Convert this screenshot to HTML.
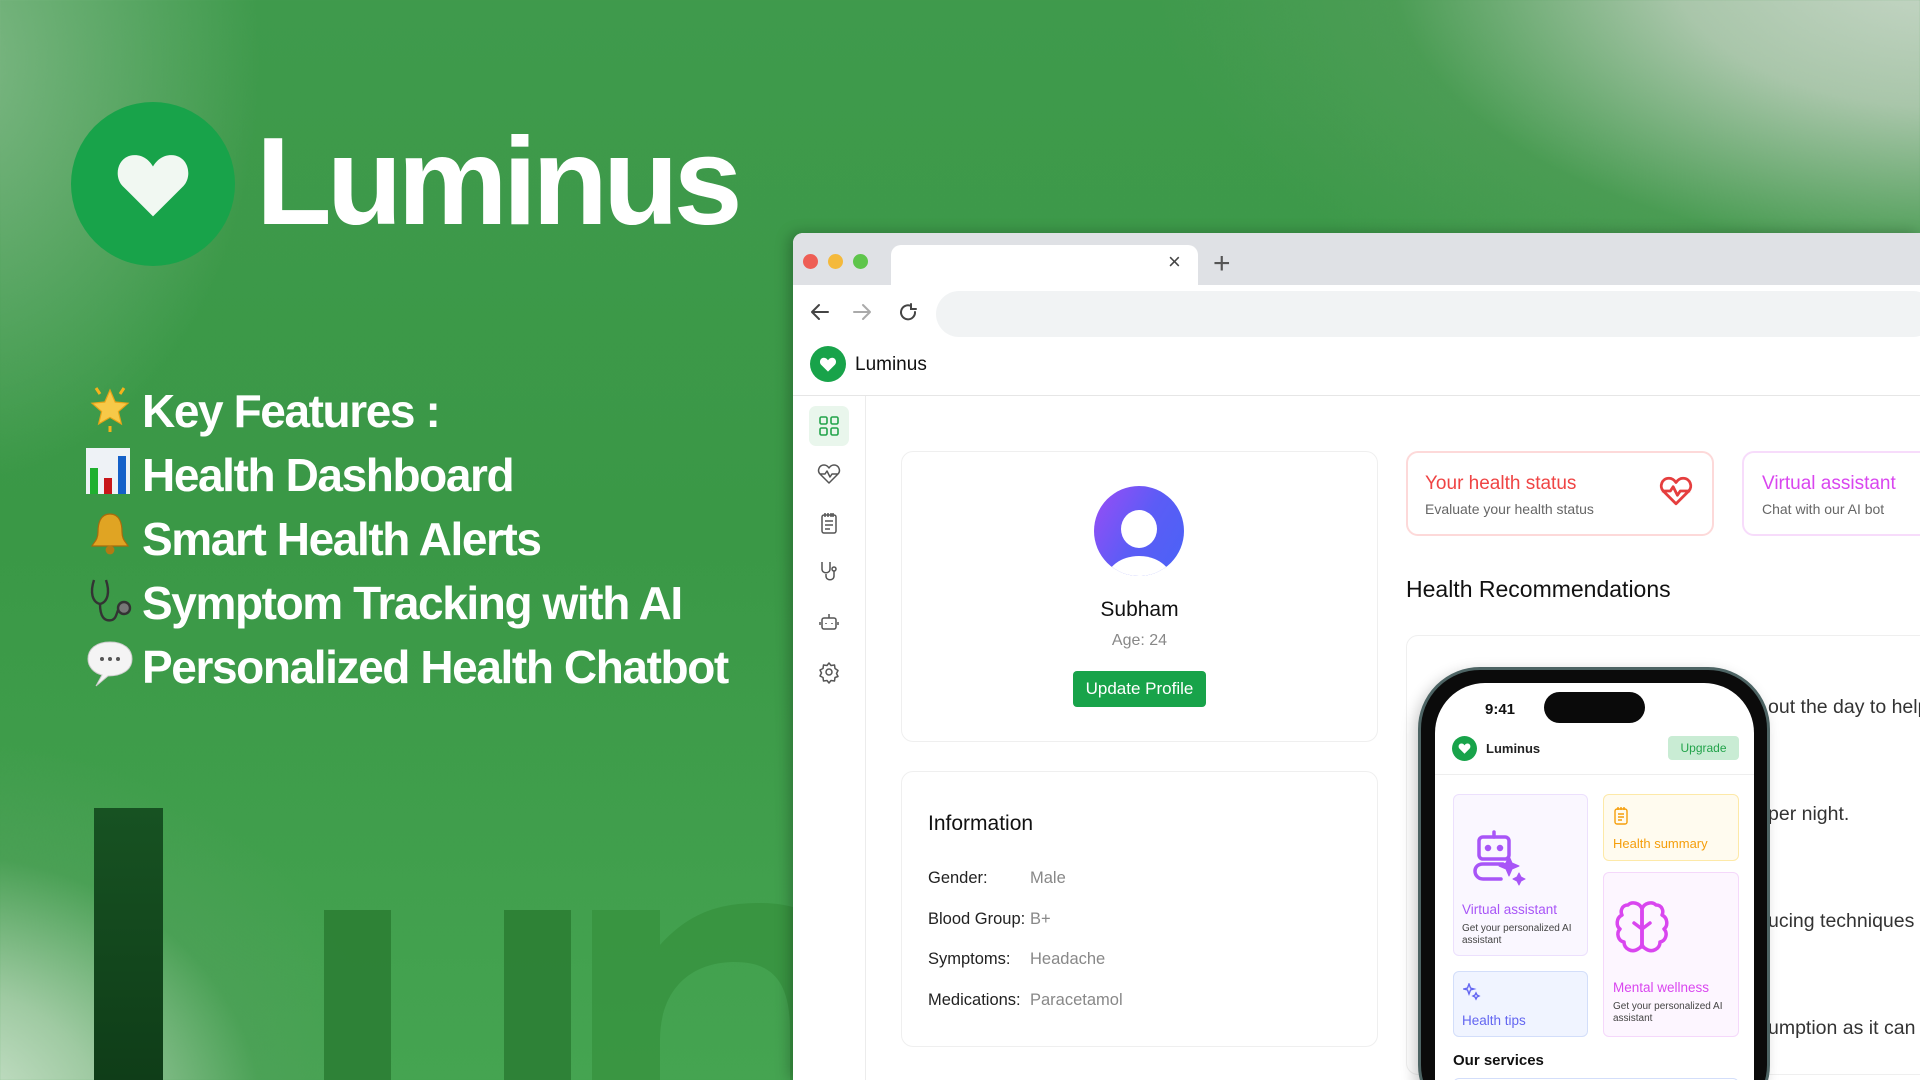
<!DOCTYPE html>
<html style="width:1920px;height:1080px;overflow:hidden"><head><meta charset="utf-8"><style>
*{margin:0;padding:0;box-sizing:border-box}
body{width:1920px;height:1080px;overflow:hidden;position:relative;font-family:"Liberation Sans",sans-serif;
background:
radial-gradient(ellipse 800px 420px at 1950px -40px,#c9d8c9 0%,#a9c6aa 35%,rgba(90,160,95,0.45) 70%,rgba(62,154,72,0) 100%),
radial-gradient(ellipse 460px 380px at -60px 1120px,#d6e8d6 0%,#9fcaa2 35%,rgba(80,160,90,0.6) 70%,rgba(62,154,72,0) 100%),
radial-gradient(ellipse 300px 420px at -40px 60px,#7db784 0%,rgba(62,154,72,0) 100%),
linear-gradient(180deg,#3f9a4c 0%,#3a9846 50%,#45a451 100%);}
.abs{position:absolute}
.feat{position:absolute;left:142px;color:#fff;font-weight:bold;font-size:46px;letter-spacing:-1.4px;white-space:nowrap}
.emo{position:absolute;left:86px}
</style></head><body>

<svg class="abs" style="left:0;top:0" width="800" height="1080">
 <defs><linearGradient id="lg" x1="0" y1="0" x2="0" y2="1"><stop offset="0" stop-color="#175222"/><stop offset="1" stop-color="#0f3d18"/></linearGradient></defs>
 <rect x="94" y="808" width="69" height="272" fill="url(#lg)"/>
 <path d="M324 910 H391 V1080 H324 Z M504 910 H571 V1080 H504 Z" fill="#2a7d33" opacity="0.85"/>
 <path d="M592 910 H660 V945 C690 912 720 903 760 903 C830 903 860 950 860 1010 V1080 H790 V1030 C790 985 775 962 735 962 C690 962 660 990 660 1040 V1080 H592 Z" fill="#37923f" opacity="0.8"/>
</svg>

<div class="abs" style="left:71px;top:102px;width:164px;height:164px;border-radius:50%;background:#18a34a"></div>
<svg class="abs" style="left:114px;top:152px" width="78" height="66" viewBox="0 0 24 21"><path d="M12 20.5 L2.3 10.8 C-0.6 7.8 0.6 1.2 6 1 C8.8 0.9 10.8 2.6 12 4.6 C13.2 2.6 15.2 0.9 18 1 C23.4 1.2 24.6 7.8 21.7 10.8 Z" fill="#f1f8f2"/></svg>
<div class="abs" style="left:256px;top:120px;color:#fff;font-weight:bold;font-size:124px;letter-spacing:-5px;line-height:1">Luminus</div>

<svg class="emo" style="top:384px" width="48" height="48" viewBox="0 0 24 24"><path d="M12 3 L14.6 9 L21 9.6 L16.2 13.8 L17.7 20 L12 16.7 L6.3 20 L7.8 13.8 L3 9.6 L9.4 9 Z" fill="#f7c948" stroke="#e8a317" stroke-width=".6"/><path d="M5 2 l2 3 M19 2 l-2 3 M12 21 v3" stroke="#f5b21b" stroke-width="1.5"/></svg>
<div class="feat" style="top:384px">Key Features :</div>
<svg class="emo" style="top:448px" width="44" height="46" viewBox="0 0 44 46"><rect width="44" height="46" fill="#eef2f6"/><rect x="4" y="20" width="8" height="26" fill="#1fb02f"/><rect x="18" y="30" width="8" height="16" fill="#c8161a"/><rect x="32" y="8" width="8" height="38" fill="#1460c8"/></svg>
<div class="feat" style="top:448px">Health Dashboard</div>
<svg class="emo" style="top:510px" width="48" height="48" viewBox="0 0 24 24"><path d="M12 2 C7 2 6 7 6 11 C6 15 4 16 3 18 H21 C20 16 18 15 18 11 C18 7 17 2 12 2 Z" fill="#e0a423" stroke="#a86b0c" stroke-width=".6"/><circle cx="12" cy="20" r="2.2" fill="#b37a12"/></svg>
<div class="feat" style="top:512px">Smart Health Alerts</div>
<svg class="emo" style="top:576px" width="48" height="48" viewBox="0 0 24 24" fill="none" stroke="#333" stroke-width="1.2"><path d="M4 2 C2 8 3 13 7 14 C11 13 12 8 10 2"/><path d="M7 14 C7 20 9 23 13 22 C16 21 15 16 18 15"/><circle cx="19" cy="16" r="3" fill="#777"/></svg>
<div class="feat" style="top:576px">Symptom Tracking with AI</div>
<svg class="emo" style="top:638px" width="48" height="52" viewBox="0 0 24 26"><path d="M12 2 C5 2 1 5.5 1 10.5 C1 14.5 4 17.5 8 18.5 L5 24 L11 19 C18 19 23 16 23 10.5 C23 5.5 19 2 12 2 Z" fill="#f4f4f4" stroke="#ccc" stroke-width=".5"/><circle cx="8" cy="10.5" r="1" fill="#555"/><circle cx="12" cy="10.5" r="1" fill="#555"/><circle cx="16" cy="10.5" r="1" fill="#555"/></svg>
<div class="feat" style="top:640px">Personalized Health Chatbot</div>

<div class="abs" style="left:793px;top:233px;width:1127px;height:847px;background:#fff;border-radius:10px 0 0 0;box-shadow:-4px 0 14px rgba(0,0,0,.25);overflow:hidden">
 <div class="abs" style="left:0;top:0;width:1140px;height:52px;background:#dfe1e5"></div>
 <div class="abs" style="left:10px;top:21px;width:15px;height:15px;border-radius:50%;background:#ee5e55"></div>
 <div class="abs" style="left:35px;top:21px;width:15px;height:15px;border-radius:50%;background:#f4b93c"></div>
 <div class="abs" style="left:60px;top:21px;width:15px;height:15px;border-radius:50%;background:#5ec54b"></div>
 <div class="abs" style="left:98px;top:12px;width:307px;height:42px;background:#fff;border-radius:10px 10px 0 0"></div>
 <div class="abs" style="left:375px;top:16px;font-size:22px;color:#444">×</div>
 <div class="abs" style="left:420px;top:14px;font-size:30px;color:#555">+</div>
 <svg class="abs" style="left:16px;top:67px" width="120" height="24" fill="none" stroke-width="2" stroke-linecap="round"><path d="M3 12 H19 M3 12 L10 5 M3 12 L10 19" stroke="#444"/><path d="M45 12 H61 M61 12 L54 5 M61 12 L54 19" stroke="#aaa"/><path d="M102 6 A7 7 0 1 0 106 12 M102 4 V9 H107" stroke="#444"/></svg>
 <div class="abs" style="left:143px;top:58px;width:1000px;height:46px;background:#f1f3f4;border-radius:23px"></div>
 <div class="abs" style="left:17px;top:113px;width:36px;height:36px;border-radius:50%;background:#18a34a"></div>
 <svg class="abs" style="left:26px;top:124px" width="18" height="15" viewBox="0 0 24 21"><path d="M12 20.5 L2.3 10.8 C-0.6 7.8 0.6 1.2 6 1 C8.8 0.9 10.8 2.6 12 4.6 C13.2 2.6 15.2 0.9 18 1 C23.4 1.2 24.6 7.8 21.7 10.8 Z" fill="#fff"/></svg>
 <div class="abs" style="left:62px;top:121px;font-size:19px;color:#111">Luminus</div>
 <div class="abs" style="left:0;top:162px;width:1140px;height:1px;background:#e6e6e6"></div>
 <div class="abs" style="left:72px;top:163px;width:1px;height:700px;background:#ececec"></div>
 <div class="abs" style="left:16px;top:173px;width:40px;height:40px;border-radius:7px;background:#e9f6ec"></div>
 <svg class="abs" style="left:25px;top:182px" width="22" height="22" fill="none" stroke="#22a34a" stroke-width="1.6"><rect x="2" y="2" width="7" height="7" rx="1.5"/><rect x="13" y="2" width="7" height="7" rx="1.5"/><rect x="2" y="13" width="7" height="7" rx="1.5"/><rect x="13" y="13" width="7" height="7" rx="1.5"/></svg>
 <svg class="abs" style="left:24px;top:230px" width="24" height="230" fill="none" stroke="#555" stroke-width="1.5" stroke-linejoin="round">
  <path d="M12 20 L3 11 C0 8 2 2 7 2 C9.5 2 11 3.5 12 5 C13 3.5 14.5 2 17 2 C22 2 24 8 21 11 Z M3 11 H8 L10 8 L13 14 L15 11 H21"/>
  <rect x="5" y="52" width="14" height="18" rx="2"/><path d="M8 50 V54 M11 50 V54 M14 50 V54 M16 50V54 M8 58 H16 M8 62 H16 M8 66 H13"/>
  <path d="M5 99 V106 C5 111 13 111 13 106 V99 M9 111 V113 C9 118 17 118 17 113 V108"/><circle cx="17" cy="106" r="2"/>
  <rect x="5" y="155" width="14" height="11" rx="2"/><path d="M12 151 V155 M9 160 V161 M15 160 V161 M3 159 V162 M21 159 V162"/>
  <circle cx="12" cy="209" r="3"/><path d="M12 200 L14 202.5 L17.5 202 L18 205.5 L21 207.5 L19.5 210.5 L21 213.5 L18 214.5 L17.5 218 L14 217.5 L12 220 L10 217.5 L6.5 218 L6 214.5 L3 213 L4.5 210 L3 207 L6 205.5 L6.5 202 L10 202.5 Z"/>
 </svg>
 <div class="abs" style="left:108px;top:218px;width:477px;height:291px;border:1px solid #efefef;border-radius:12px"></div>
 <div class="abs" style="left:301px;top:253px;width:90px;height:90px;border-radius:50%;background:linear-gradient(120deg,#9b4cf5 0%,#5c5cf6 50%,#4963f7 100%);overflow:hidden">
  <div class="abs" style="left:27px;top:24px;width:36px;height:38px;border-radius:50%;background:#fff"></div>
  <div class="abs" style="left:12px;top:70px;width:66px;height:50px;border-radius:50%;background:#fff"></div>
 </div>
 <div class="abs" style="left:108px;top:365px;width:477px;text-align:center;font-size:21px;color:#111">Subham</div>
 <div class="abs" style="left:108px;top:399px;width:477px;text-align:center;font-size:16px;color:#888">Age: 24</div>
 <div class="abs" style="left:280px;top:438px;width:133px;height:36px;border-radius:4px;background:#18a34a;color:#fff;font-size:17px;text-align:center;line-height:36px">Update Profile</div>
 <div class="abs" style="left:108px;top:538px;width:477px;height:276px;border:1px solid #efefef;border-radius:12px"></div>
 <div class="abs" style="left:135px;top:579px;font-size:21px;color:#111">Information</div>
 <div class="abs" style="left:135px;top:625px;font-size:16.5px;color:#222;line-height:40.5px">Gender:<br>Blood Group:<br>Symptoms:<br>Medications:</div>
 <div class="abs" style="left:237px;top:625px;font-size:16.5px;color:#888;line-height:40.5px">Male<br>B+<br>Headache<br>Paracetamol</div>
 <div class="abs" style="left:613px;top:218px;width:308px;height:85px;border:2px solid #fdd9d9;border-radius:12px"></div>
 <div class="abs" style="left:632px;top:240px;font-size:19px;color:#ef4444">Your health status</div>
 <div class="abs" style="left:632px;top:268px;font-size:14px;color:#666">Evaluate your health status</div>
 <svg class="abs" style="left:866px;top:242px" width="34" height="32" viewBox="0 0 24 22" fill="none" stroke="#e53e3e" stroke-width="2" stroke-linejoin="round"><path d="M12 20 L3 11 C0 8 2 2 7 2 C9.5 2 11 3.5 12 5 C13 3.5 14.5 2 17 2 C22 2 24 8 21 11 Z M2 11 H8 L10 8 L13 14 L15 11 H22"/></svg>
 <div class="abs" style="left:949px;top:218px;width:300px;height:85px;border:2px solid #f7dcfb;border-radius:12px"></div>
 <div class="abs" style="left:969px;top:240px;font-size:19px;color:#d946ef">Virtual assistant</div>
 <div class="abs" style="left:969px;top:268px;font-size:14px;color:#666">Chat with our AI bot</div>
 <div class="abs" style="left:613px;top:343px;font-size:23px;color:#111">Health Recommendations</div>
 <div class="abs" style="left:613px;top:402px;width:600px;height:440px;border:1px solid #efefef;border-radius:12px"></div>
 <div class="abs" style="left:975px;top:421px;font-size:19.5px;color:#333;line-height:107px;white-space:nowrap">out the day to help<br>per night.<br>ucing techniques<br>umption as it can t</div>
</div>

<div class="abs" style="left:1418px;top:667px;width:352px;height:460px;border-radius:62px;background:#0b0b0b;border:3px solid #4d6464;box-shadow:-4px 4px 14px rgba(0,0,0,.2)"></div>
<div class="abs" style="left:1435px;top:683px;width:319px;height:420px;border-radius:50px 50px 0 0;background:#fff;overflow:hidden">
 <div class="abs" style="left:50px;top:18px;font-size:15px;font-weight:bold;color:#111">9:41</div>
 <div class="abs" style="left:109px;top:9px;width:101px;height:31px;border-radius:16px;background:#0a0a0a"></div>
 <div class="abs" style="left:17px;top:53px;width:25px;height:25px;border-radius:50%;background:#18a34a"></div>
 <svg class="abs" style="left:23px;top:60px" width="13" height="11" viewBox="0 0 24 21"><path d="M12 20.5 L2.3 10.8 C-0.6 7.8 0.6 1.2 6 1 C8.8 0.9 10.8 2.6 12 4.6 C13.2 2.6 15.2 0.9 18 1 C23.4 1.2 24.6 7.8 21.7 10.8 Z" fill="#fff"/></svg>
 <div class="abs" style="left:51px;top:58px;font-size:13px;font-weight:bold;color:#222">Luminus</div>
 <div class="abs" style="left:233px;top:53px;width:71px;height:24px;border-radius:4px;background:#c9ecd4;color:#22a34a;font-size:12px;text-align:center;line-height:24px">Upgrade</div>
 <div class="abs" style="left:0;top:91px;width:319px;height:1px;background:#eee"></div>
 <div class="abs" style="left:18px;top:111px;width:135px;height:162px;border:1px solid #ece0fd;background:#faf7ff;border-radius:6px"></div>
 <svg class="abs" style="left:38px;top:147px" width="54" height="56" viewBox="0 0 54 56" fill="none" stroke="#a855f7" stroke-width="3.5" stroke-linecap="round" stroke-linejoin="round"><rect x="6" y="7" width="30" height="22" rx="4"/><path d="M21 2 V7"/><circle cx="15" cy="18" r="1.5" fill="#a855f7"/><circle cx="27" cy="18" r="1.5" fill="#a855f7"/><path d="M30 34 H10 C4 34 2 38 2 41 C2 46 6 49 10 49 H28"/><path d="M36 26 L39 33 L46 36 L39 39 L36 46 L33 39 L26 36 L33 33 Z" fill="#a855f7" stroke-width="1"/><path d="M46 43 L48 47 L52 49 L48 51 L46 55 L44 51 L40 49 L44 47 Z" fill="#a855f7" stroke-width="1"/></svg>
 <div class="abs" style="left:27px;top:219px;font-size:13.5px;color:#a855f7">Virtual assistant</div>
 <div class="abs" style="left:27px;top:240px;font-size:10px;color:#444;line-height:12px;width:120px">Get your personalized AI assistant</div>
 <div class="abs" style="left:168px;top:111px;width:136px;height:67px;border:1px solid #fde9a8;background:#fffbef;border-radius:6px"></div>
 <svg class="abs" style="left:178px;top:123px" width="16" height="20" fill="none" stroke="#f59e0b" stroke-width="1.4"><rect x="2" y="3" width="12" height="15" rx="2"/><path d="M5 1 V4 M8 1 V4 M11 1 V4 M5 8 H11 M5 11 H11 M5 14 H9"/></svg>
 <div class="abs" style="left:178px;top:153px;font-size:13px;color:#f59e0b">Health summary</div>
 <div class="abs" style="left:168px;top:189px;width:136px;height:165px;border:1px solid #f5d8fb;background:#fdf6ff;border-radius:6px"></div>
 <svg class="abs" style="left:179px;top:216px" width="56" height="58" viewBox="0 0 56 58" fill="none" stroke="#d946ef" stroke-width="3.5" stroke-linecap="round" stroke-linejoin="round"><path d="M28 10 C26 4 18 2 14 6 C8 6 6 12 8 16 C2 19 2 27 6 30 C2 34 4 42 10 43 C10 50 18 54 24 50 C26 49 28 47 28 44 Z"/><path d="M28 10 C30 4 38 2 42 6 C48 6 50 12 48 16 C54 19 54 27 50 30 C54 34 52 42 46 43 C46 50 38 54 32 50 C30 49 28 47 28 44 Z"/><path d="M28 12 V48 M28 30 L20 24 M28 30 L36 24"/></svg>
 <div class="abs" style="left:178px;top:297px;font-size:13.5px;color:#d946ef">Mental wellness</div>
 <div class="abs" style="left:178px;top:318px;font-size:10px;color:#444;line-height:12px;width:120px">Get your personalized AI assistant</div>
 <div class="abs" style="left:18px;top:288px;width:135px;height:66px;border:1px solid #d3defa;background:#f0f4ff;border-radius:6px"></div>
 <svg class="abs" style="left:28px;top:300px" width="18" height="18" fill="none" stroke="#6366f1" stroke-width="1.4"><path d="M6 1 L7.5 5 L11 6 L7.5 7 L6 11 L4.5 7 L1 6 L4.5 5 Z M13 10 L14 12 L16 13 L14 14 L13 16 L12 14 L10 13 L12 12 Z"/></svg>
 <div class="abs" style="left:27px;top:330px;font-size:13.5px;color:#6366f1">Health tips</div>
 <div class="abs" style="left:18px;top:369px;font-size:15px;font-weight:bold;color:#111">Our services</div>
 <div class="abs" style="left:18px;top:395px;width:286px;height:20px;border:1px solid #d3defa;border-radius:6px"></div>
</div>
</body></html>
